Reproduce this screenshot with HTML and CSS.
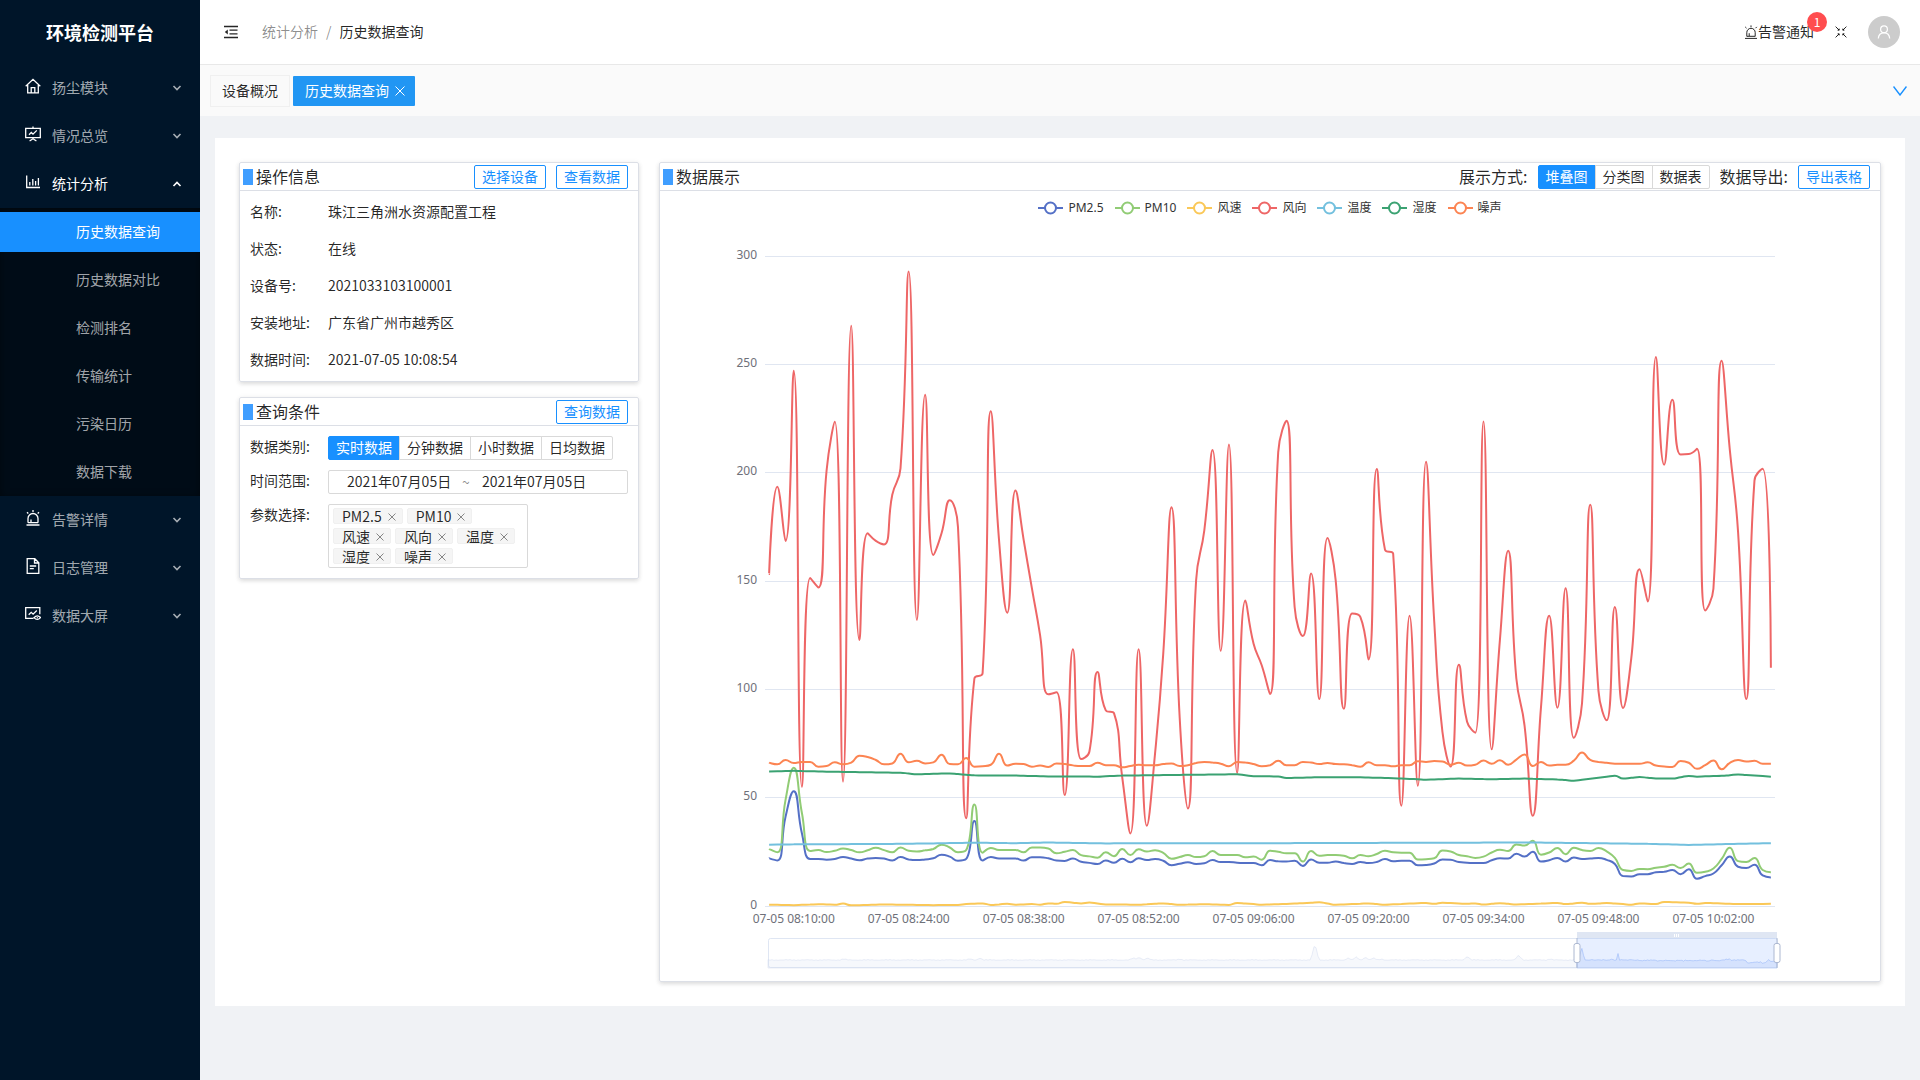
FILE: index.html
```html
<!DOCTYPE html>
<html lang="zh-CN">
<head>
    <meta charset="UTF-8">
    <meta name="viewport" content="width=device-width, initial-scale=1.0">
    <title>历史数据查询 - 环境检测平台</title>
    <link rel="stylesheet" href="styles.css">
</head>
<body>
    <div class="layout">
        <aside class="sider">
            <h1 class="logo">环境检测平台</h1>
            <nav class="menu">
                <button type="button" class="menu-item">
                    <svg class="menu-icon" viewBox="0 0 16 16"><path d="M.7 8.3 8 1.3l7.3 7M2.7 7v7.8h10.6V7M6.2 14.8V9.6h3.6v5.2"/></svg>
                    <span>扬尘模块</span>
                    <svg class="arrow" viewBox="0 0 10 10"><path d="M1.5 3 5 6.5 8.5 3"/></svg>
                </button>
                <button type="button" class="menu-item">
                    <svg class="menu-icon" viewBox="0 0 16 16"><path d="M8 .4v2M.7 2.4h14.6v9.2H.7zM4 8.8l2.3-2.3L8 8.2l3.8-3.8M8 11.6v1.6M4.6 15l3.4-2.2 3.4 2.2"/></svg>
                    <span>情况总览</span>
                    <svg class="arrow" viewBox="0 0 10 10"><path d="M1.5 3 5 6.5 8.5 3"/></svg>
                </button>
                <button type="button" class="menu-item open">
                    <svg class="menu-icon" viewBox="0 0 16 16"><path d="M1.7 1.5v12h13.3M4.8 11.5V8M7.8 11.5V5M10.6 11.5V7M13.4 11.5V4"/></svg>
                    <span>统计分析</span>
                    <svg class="arrow" viewBox="0 0 10 10"><path d="M1.5 7 5 3.500 8.5 7"/></svg>
                </button>
                <div class="submenu">
                    <a href="#" class="active">历史数据查询</a>
                    <a href="#">历史数据对比</a>
                    <a href="#">检测排名</a>
                    <a href="#">传输统计</a>
                    <a href="#">污染日历</a>
                    <a href="#">数据下载</a>
                </div>
                <button type="button" class="menu-item">
                    <svg class="menu-icon" viewBox="0 0 16 16"><path d="M1.5 15h13M3 12.800V8.500a5 5 0 0 1 10 0v4.300M3 12.600h10M6 12.500V9.500M8 0v2M2 2.200l1.300 1.300M14 2.200l-1.300 1.300"/></svg>
                    <span>告警详情</span>
                    <svg class="arrow" viewBox="0 0 10 10"><path d="M1.5 3 5 6.5 8.5 3"/></svg>
                </button>
                <button type="button" class="menu-item">
                    <svg class="menu-icon" viewBox="0 0 16 16"><path d="M2.200.7h7.600l4 4v10.600H2.200zM9.500.9V5h4M4.800 8h6.400M4.800 10.700h4"/></svg>
                    <span>日志管理</span>
                    <svg class="arrow" viewBox="0 0 10 10"><path d="M1.5 3 5 6.5 8.5 3"/></svg>
                </button>
                <button type="button" class="menu-item">
                    <svg class="menu-icon" viewBox="0 0 16 16"><path d="M8.500 12.300H.7V1.700h14.100v6.500M3.700 8.800l2.500-2.500 1.900 1.900 3.700-3.700M9 11.600q3.300-3.600 6.600 0-3.300 3.600-6.600 0zM11.800 11.600h1"/></svg>
                    <span>数据大屏</span>
                    <svg class="arrow" viewBox="0 0 10 10"><path d="M1.5 3 5 6.5 8.5 3"/></svg>
                </button>
            </nav>
        </aside>

        <div class="main">
            <header class="header">
                <button type="button" class="icon-btn" aria-label="收起菜单">
                    <svg class="fold-icon" viewBox="0 0 14 14"><path d="M0 1.500h14M5.500 5.200h8M5.500 8.800h8M0 12.500h14"/><path class="solid" d="M3.800 4.500v5L.8 7z"/></svg>
                </button>
                <div class="breadcrumb">
                    <a href="#">统计分析</a><span class="sep">/</span><span class="current">历史数据查询</span>
                </div>
                <div class="header-right">
                    <button type="button" class="notice">
                        <svg viewBox="0 0 14 14"><path d="M1 13.400h12M2.800 11.400V7.500a4.200 4.200 0 0 1 8.400 0v3.900M2.800 11.300h8.400M5.200 11V8.200M7 .4v1.800M1.200 1.900l1.300 1.300M12.800 1.900l-1.300 1.300"/></svg>
                        <span>告警通知</span>
                        <sup class="badge">1</sup>
                    </button>
                    <button type="button" class="icon-btn" aria-label="退出全屏">
                        <svg class="screen-icon" viewBox="0 0 12 12"><path d="M.6.6 4 4M8 4 11.400.6M.6 11.400 4 8M8 8l3.400 3.400"/><path d="M4.200 2.600v1.600H2.600M7.800 2.600v1.600h1.600M4.200 9.400V7.800H2.600M7.800 9.400V7.800h1.600"/></svg>
                    </button>
                    <button type="button" class="avatar" aria-label="用户">
                        <svg viewBox="0 0 14 14"><circle cx="7" cy="4.200" r="3.400"/><path d="M1.300 13.500c.2-3.400 2.500-5.700 5.700-5.700s5.500 2.300 5.700 5.700"/></svg>
                    </button>
                </div>
            </header>

            <div class="tabs">
                <a href="#" class="tab">设备概况</a>
                <a href="#" class="tab active">历史数据查询
                    <svg viewBox="0 0 10 10"><path d="m.5.5 9 9m0-9-9 9"/></svg>
                </a>
                <button type="button" class="icon-btn tabs-more" aria-label="更多标签">
                    <svg viewBox="0 0 14 10"><path d="M.5.5 7 9 13.500.5"/></svg>
                </button>
            </div>

            <main class="content">
                <div class="left-col">
                    <section class="card">
                        <div class="card-head">
                            <h2>操作信息</h2>
                            <div class="card-tools">
                                <button type="button" class="btn">选择设备</button>
                                <button type="button" class="btn">查看数据</button>
                            </div>
                        </div>
                        <dl class="info">
                            <div><dt>名称:</dt><dd>珠江三角洲水资源配置工程</dd></div>
                            <div><dt>状态:</dt><dd>在线</dd></div>
                            <div><dt>设备号:</dt><dd>2021033103100001</dd></div>
                            <div><dt>安装地址:</dt><dd>广东省广州市越秀区</dd></div>
                            <div><dt>数据时间:</dt><dd>2021-07-05 10:08:54</dd></div>
                        </dl>
                    </section>

                    <section class="card">
                        <div class="card-head">
                            <h2>查询条件</h2>
                            <div class="card-tools">
                                <button type="button" class="btn">查询数据</button>
                            </div>
                        </div>
                        <form class="query">
                            <div class="form-row">
                                <span class="form-label" id="typeLabel">数据类别:</span>
                                <div class="radio-group" role="radiogroup" aria-labelledby="typeLabel">
                                    <label><input type="radio" name="type" checked><span>实时数据</span></label>
                                    <label><input type="radio" name="type"><span>分钟数据</span></label>
                                    <label><input type="radio" name="type"><span>小时数据</span></label>
                                    <label><input type="radio" name="type"><span>日均数据</span></label>
                                </div>
                            </div>
                            <div class="form-row">
                                <label class="form-label" for="startDate">时间范围:</label>
                                <div class="range">
                                    <input type="text" id="startDate" value="2021年07月05日">
                                    <span>~</span>
                                    <input type="text" aria-label="结束日期" value="2021年07月05日">
                                </div>
                            </div>
                            <div class="form-row">
                                <span class="form-label">参数选择:</span>
                                <div class="tags" id="tags"></div>
                            </div>
                        </form>
                    </section>
                </div>

                <section class="card chart-card">
                    <div class="card-head">
                        <h2>数据展示</h2>
                        <div class="card-tools">
                            <span class="tool-label" id="modeLabel">展示方式:</span>
                            <div class="radio-group" role="radiogroup" aria-labelledby="modeLabel">
                                <label><input type="radio" name="mode" checked><span>堆叠图</span></label>
                                <label><input type="radio" name="mode"><span>分类图</span></label>
                                <label><input type="radio" name="mode"><span>数据表</span></label>
                            </div>
                            <span class="tool-label">数据导出:</span>
                            <button type="button" class="btn">导出表格</button>
                        </div>
                    </div>
                    <div class="legend" id="legend"></div>
                    <svg class="chart" id="chart"></svg>
                </section>
            </main>
        </div>
    </div>
    <script src="chart.js"></script>
</body>
</html>
```
FILE: styles.css
```css
* {
    box-sizing: border-box;
}
body {
    margin: 0;
    font-family: "Noto Sans CJK SC", sans-serif;
    font-size: 14px;
    line-height: 22px;
    color: rgba(0, 0, 0, 0.85);
    background-color: #f0f2f5;
}
button, input {
    font: inherit;
    color: inherit;
}
button {
    padding: 0;
    border: none;
    background: none;
    cursor: pointer;
}
a {
    color: inherit;
    text-decoration: none;
}
svg {
    fill: none;
    stroke: currentColor;
}
.layout {
    display: flex;
    min-height: 100vh;
}

/* 侧边栏 */
.sider {
    flex: 0 0 200px;
    background-color: #001529;
    color: #fff;
}
.logo {
    margin: 0;
    font-size: 18px;
    line-height: 64px;
    text-align: center;
}
.menu-item {
    display: flex;
    align-items: center;
    width: 100%;
    height: 48px;
    padding: 0 18px 0 25px;
    color: rgba(255, 255, 255, 0.65);
    text-align: left;
}
.menu-item span {
    flex: 1;
    padding-bottom: 2px;
}
.menu-item.open {
    color: #fff;
}
.menu-icon {
    width: 16px;
    height: 16px;
    margin: 0 11px 4px 0;
    color: #fff;
    stroke-width: 1.3;
}
.arrow {
    width: 10px;
    height: 10px;
    stroke-width: 1.6;
}
.submenu {
    background-color: #000c17;
    box-shadow: inset 0 2px 8px rgba(0, 0, 0, 0.45);
    padding: 4px 0;
    display: flex;
    flex-direction: column;
    gap: 8px;
}
.submenu a {
    padding: 0 0 2px 76px;
    line-height: 38px;
    color: rgba(255, 255, 255, 0.65);
}
.submenu a.active {
    color: #fff;
    background-color: #1890ff;
}

/* 顶部 */
.main {
    flex: 1;
    min-width: 0;
}
.header {
    display: flex;
    align-items: center;
    height: 65px;
    padding: 0 20px 0 24px;
    background-color: #fff;
    border-bottom: 1px solid #e8e8e8;
}
.icon-btn {
    display: flex;
}
.fold-icon {
    width: 14px;
    height: 14px;
    stroke-width: 1.3;
}
.fold-icon .solid {
    fill: currentColor;
    stroke: none;
}
.breadcrumb {
    margin-left: 24px;
    padding-bottom: 2px;
    color: rgba(0, 0, 0, 0.45);
}
.breadcrumb .sep {
    margin: 0 8px;
}
.breadcrumb .current {
    color: rgba(0, 0, 0, 0.85);
}
.header-right {
    display: flex;
    align-items: center;
    margin-left: auto;
}
.notice {
    position: relative;
    display: flex;
    align-items: center;
    margin-right: 21px;
}
.notice span {
    padding-bottom: 2px;
}
.notice svg {
    width: 14px;
    height: 14px;
}
.badge {
    position: absolute;
    top: -8px;
    right: -13px;
    width: 20px;
    height: 20px;
    border-radius: 10px;
    background-color: #ff4d4f;
    color: #fff;
    font-size: 12px;
    line-height: 20px;
}
.screen-icon {
    width: 12px;
    height: 12px;
}
.avatar {
    display: flex;
    align-items: center;
    justify-content: center;
    width: 32px;
    height: 32px;
    margin-left: 21px;
    border-radius: 50%;
    background-color: #ccc;
    color: #fff;
}
.avatar svg {
    width: 14px;
    height: 14px;
    stroke-width: 1.2;
}
.tabs {
    display: flex;
    align-items: center;
    gap: 3px;
    height: 51px;
    padding: 0 13px 0 10px;
    background-color: #fafafa;
}
.tab {
    display: flex;
    align-items: center;
    gap: 6px;
    height: 32px;
    padding: 0 11px 2px;
    border: 1px solid #f0f0f0;
}
.tab.active {
    height: 30px;
    padding: 0 10px 2px 12px;
    border: none;
    border-radius: 1px;
    background-color: #2196f3;
    color: #fff;
}
.tab svg {
    width: 10px;
    height: 10px;
    margin-top: 3px;
}
.tabs-more {
    margin-left: auto;
    color: #1890ff;
}
.tabs-more svg {
    width: 14px;
    height: 10px;
    stroke-width: 1.4;
}

/* 内容 */
.content {
    display: flex;
    align-items: flex-start;
    gap: 20px;
    margin: 22px 15px 0;
    padding: 24px;
    background-color: #fff;
}
.left-col {
    flex: 0 0 400px;
    display: flex;
    flex-direction: column;
    gap: 15px;
}
.card {
    border: 1px solid #dcdfe6;
    border-radius: 2px;
    box-shadow: 0 2px 4px rgba(0, 0, 0, 0.12), 0 0 6px rgba(0, 0, 0, 0.04);
}
.chart-card {
    flex: 1;
    min-width: 0;
}
.card-head {
    display: flex;
    align-items: center;
    height: 28px;
    padding: 0 10px 0 3px;
    border-bottom: 1px solid #dcdfe6;
}
.card-head h2 {
    display: flex;
    align-items: center;
    gap: 3px;
    margin: 0;
    padding-bottom: 2px;
    font-size: 16px;
    font-weight: normal;
}
.card-head h2::before {
    content: "";
    width: 10px;
    height: 16px;
    margin-top: 3px;
    background-color: #409eff;
}
.card-tools {
    display: flex;
    align-items: center;
    gap: 10px;
    margin-left: auto;
}
.tool-label {
    padding-bottom: 2px;
    font-size: 16px;
}
.btn {
    height: 24px;
    padding: 0 7px 2px;
    border: 1px solid #1890ff;
    border-radius: 2px;
    background-color: #fff;
    color: #1890ff;
    line-height: 20px;
}
.info {
    margin: 0;
    padding: 3px 10px 2px;
}
.info div {
    display: flex;
    padding-bottom: 2px;
    line-height: 35px;
}
.info dt {
    width: 78px;
}
.info dd {
    margin: 0;
}
.query {
    display: flex;
    flex-direction: column;
    gap: 10px;
    padding: 10px;
}
.form-row {
    display: flex;
}
.form-label {
    width: 78px;
    line-height: 20px;
}
.radio-group {
    display: flex;
}
.radio-group label {
    position: relative;
    cursor: pointer;
}
.radio-group label + label {
    margin-left: -1px;
}
.radio-group input {
    position: absolute;
    margin: 0;
    opacity: 0;
}
.radio-group span {
    display: block;
    padding: 0 7px 2px;
    border: 1px solid #d9d9d9;
    background-color: #fff;
    line-height: 20px;
}
.radio-group label:first-child span {
    border-radius: 2px 0 0 2px;
}
.radio-group label:last-child span {
    border-radius: 0 2px 2px 0;
}
.radio-group input:checked + span {
    border-color: #1890ff;
    background-color: #1890ff;
    color: #fff;
}
.range {
    flex: 1;
    display: flex;
    align-items: center;
    height: 24px;
    padding-left: 18px;
    border: 1px solid #d9d9d9;
    border-radius: 2px;
}
.range input {
    width: 115px;
    height: 22px;
    padding: 0 0 2px;
    border: none;
    outline: none;
    background: none;
}
.range span {
    width: 20px;
    color: rgba(0, 0, 0, 0.45);
}
.tags {
    display: flex;
    flex-wrap: wrap;
    gap: 4px;
    width: 200px;
    padding: 3px 4px;
    border: 1px solid #d9d9d9;
    border-radius: 2px;
}
.tag {
    display: flex;
    align-items: center;
    gap: 6px;
    height: 16px;
    padding: 0 6px 0 8px;
    border: 1px solid #f0f0f0;
    border-radius: 2px;
    background-color: #f5f5f5;
    line-height: 14px;
}
.tag button {
    display: flex;
    padding-top: 1px;
    color: rgba(0, 0, 0, 0.45);
}
.tag svg {
    width: 8px;
    height: 8px;
}

/* 图表 */
.legend {
    display: flex;
    justify-content: center;
    gap: 11px;
    height: 34px;
    color: #333;
    font-family: "Noto Sans", "Noto Sans CJK SC", sans-serif;
    font-size: 12px;
    line-height: 34px;
}
.legend-item {
    display: flex;
    align-items: center;
    gap: 5px;
}
.legend-item svg {
    width: 25px;
    height: 14px;
    stroke-width: 2;
}
.legend-item circle {
    fill: #fff;
}
.chart {
    display: block;
    width: 100%;
    height: 756px;
    font-family: "Noto Sans", sans-serif;
}
.chart text {
    fill: #6e7079;
    stroke: none;
    font-size: 12px;
}
.chart .grid-line {
    stroke: #e0e6f1;
    shape-rendering: crispEdges;
}
.chart .series {
    stroke-width: 2;
    stroke-linejoin: bevel;
}
.chart .zoom-box {
    stroke: #d2dbee;
    opacity: 0.7;
}
.chart .zoom-fill {
    fill: rgba(135, 175, 255, 0.2);
    stroke: none;
}
.chart .zoom-move {
    fill: #d2dbee;
    stroke: none;
    opacity: 0.7;
}
.chart .zoom-line {
    stroke: #d2dbee;
    stroke-width: 0.5;
    fill: rgba(210, 219, 238, 0.2);
}
.chart .zoom-line-on {
    stroke: #8fb0f7;
    stroke-width: 0.5;
    fill: rgba(143, 176, 247, 0.2);
}
.chart .zoom-handle {
    fill: #fff;
    stroke: #acb8d1;
}
.chart .zoom-grip {
    stroke: #fff;
}
```
FILE: chart.js
```javascript
const series = [
    { name: 'PM2.5', color: '#5470c6', data: [
        22, 21, 41.2, 53, 33.5, 21.7, 21.7, 21.4, 21.7, 22.6, 21.9, 21.1, 21.9, 22.2, 21.9, 21, 22.6, 21.5, 21.2, 21.5,
        22, 23.7, 22.8, 20.9, 21.7, 39.2, 21, 22.6, 21.9, 21.9, 21.9, 21, 22.5, 22.5, 22, 21, 20.8, 21.9, 20.4, 19.9,
        19.4, 21, 20, 21.8, 20.2, 22, 21.2, 21.7, 20.9, 18.8, 19.5, 20.2, 19.4, 19.7, 21.2, 20.3, 20.3, 20, 19.8, 19.8,
        18.8, 21.2, 20.6, 20.5, 20.9, 18.5, 21.5, 20, 20, 20.5, 19.8, 19.4, 20.3, 19.8, 20.3, 21.7, 20.6, 20.9, 20.9, 18.8,
        18.9, 19.6, 21.5, 21.3, 20.3, 20, 19.8, 19.8, 21.1, 22, 21.9, 24.1, 22.8, 25, 20.5, 21.1, 22.2, 20.5, 22.4, 21.7,
        21.9, 22.2, 21.3, 19.4, 13.8, 13.6, 14.7, 14.7, 15.6, 15.8, 16.6, 14.7, 17, 12.6, 13.8, 15, 18.8, 22.8, 18.1, 17.5,
        19, 14.1, 13.2] },
    { name: 'PM10', color: '#91cc75', data: [
        26.3, 24.8, 49, 63.8, 42.8, 25.4, 25.8, 24.9, 25.5, 26.5, 25.8, 24.8, 25.7, 26.9, 25.8, 24.8, 27, 25.5, 25.2, 25.7,
        26.3, 28.3, 27, 24.8, 25.8, 46.9, 24.6, 26.8, 25.8, 25.8, 25.8, 24.8, 27, 27, 26.5, 24.3, 25, 25.8, 23.5, 22.9,
        22.3, 24.8, 23, 26.3, 23.5, 26.2, 25.2, 25.7, 24.5, 21.8, 22.6, 23.5, 22.6, 23, 25.4, 23.5, 23.5, 23.5, 22.5, 22.8,
        21.4, 25.5, 25, 24.3, 24.3, 20.5, 25.4, 23.2, 23.5, 23.5, 23.2, 22, 23.5, 23, 24, 25.5, 24.8, 24.6, 24.6, 21.5,
        21.6, 22, 25.6, 25.2, 23.5, 23, 22.2, 22.8, 24.7, 26, 25.4, 28.4, 27.9, 30.1, 23.7, 24.7, 26.8, 23.9, 26.9, 25.8,
        25.4, 26.8, 25.2, 22.2, 16.6, 16.2, 17.1, 17, 17.7, 18.1, 19, 17.5, 19.6, 15.3, 15.8, 17.3, 21.7, 26.9, 20.7, 20.3,
        22.2, 16.6, 15.6] },
    { name: '风速', color: '#fac858', data: sparse([
        [0, 0.6], [3, 0.4], [6, 0.8], [8, 0.6], [9, 1.1], [10, 0.3], [14, 0.7], [20, 0.4], [23, 0.5], [24, 0.9], [26, 1.2],
        [27, 0.5], [29, 1], [30, 0.6], [32, 0.9], [33, 0.6], [34, 1.2], [35, 1], [36, 1.9], [38, 1.2], [39, 1.6], [41, 0.7],
        [45, 0.6], [48, 1.2], [50, 0.6], [53, 0.8], [56, 0.5], [57, 1.4], [60, 0.6], [64, 1.1], [67, 1.7], [69, 0.6],
        [73, 1.2], [75, 0.6], [78, 1.1], [80, 1.4], [81, 1], [82, 1.5], [85, 1], [86, 1.2], [87, 0.7], [89, 1.3], [91, 0.7],
        [94, 1.1], [96, 1.4], [97, 0.9], [99, 1.5], [100, 1], [102, 1.4], [105, 0.6], [106, 1.2], [108, 0.9], [109, 1.9],
        [112, 1.5], [113, 1], [114, 1.4], [118, 0.9], [122, 1]]) },
    { name: '风向', color: '#ee6666', data: [
        153.2, 193.5, 168.5, 247, 55, 151.4, 147, 201, 223.5, 57.4, 267.8, 122.8, 172, 168.5, 166.9, 189.8, 202, 292.8, 132, 236,
        162, 172, 187.3, 175, 40.5, 105, 107.4, 228.3, 169, 135.4, 191.8, 169, 146.7, 125, 97.7, 98.6, 51.2, 118.5, 67.8, 71.2,
        108, 90.3, 89, 59.5, 33.5, 118.5, 37, 70.3, 116.5, 184, 87, 45, 150.3, 173.4, 210.5, 117.8, 213, 61.4, 141, 121,
        111, 97.8, 209.5, 224, 138, 124.6, 153.5, 95.5, 169.8, 150.3, 91, 135, 133.4, 113.8, 201.7, 164.5, 162.6, 46.3, 134, 55.5,
        205, 131.3, 80.4, 64.4, 111.3, 85, 80, 223.6, 72.3, 122.8, 164, 105, 83.3, 41.6, 91.7, 134, 91.5, 146.6, 77.6, 93.6,
        185.2, 99.3, 85.7, 138, 91.4, 114.4, 155.4, 140.5, 253.4, 203.7, 233.6, 208.4, 208.6, 211, 136.4, 146.4, 251.7, 210.4, 172.8, 95.5,
        196.3, 201.8, 110] },
    { name: '温度', color: '#73c0de', data: sparse([
        [0, 28.3], [4, 28.5], [14, 28.6], [20, 28.9], [25, 29.2], [30, 29], [34, 29.3], [41, 28.9], [62, 29], [80, 29.2],
        [93, 29.3], [100, 29], [107, 28.7], [112, 28.2], [117, 28.6], [122, 29]]) },
    { name: '湿度', color: '#3ba272', data: sparse([
        [0, 62.1], [3, 62.4], [7, 62], [12, 61.7], [16, 61.5], [18, 60.8], [22, 61.2], [25, 60.3], [30, 60.2], [34, 59.8],
        [40, 59.7], [43, 60.2], [50, 60.5], [57, 60.8], [59, 59.9], [62, 59.8], [63, 59.1], [67, 59.4], [72, 59.4], [76, 59],
        [80, 58.3], [84, 58.8], [88, 58.5], [92, 58.8], [96, 58.4], [98, 57.8], [101, 59.2], [103, 60.1], [104, 58.8],
        [106, 59.5], [108, 58.9], [110, 58.8], [112, 60], [113, 59.7], [116, 60.1], [118, 60.7], [122, 59.7]]) },
    { name: '噪声', color: '#fc8452', data: [
        66.2, 65.4, 67.4, 66, 66.5, 66.5, 64.3, 64.6, 66.3, 65.4, 66.2, 69.4, 68.8, 67.4, 65.4, 65.8, 70.3, 66.3, 67, 65.8,
        66.3, 69.8, 65.5, 65.4, 68.3, 64.3, 64.5, 65.2, 70.3, 64.8, 65.7, 65.5, 64.3, 64.8, 64.2, 65.8, 65.5, 64.9, 64.6, 64.6,
        66.1, 65, 65, 64, 64.6, 65.2, 65, 65, 65.5, 65.8, 64.6, 65, 66, 66.5, 66.2, 65.7, 64.5, 66.5, 66.2, 65.5,
        64.5, 65, 67, 65, 65, 66.5, 66.2, 65.5, 66, 65.5, 65.4, 65, 64.3, 66.3, 65, 65, 64.5, 65, 65, 66.8,
        66.5, 66.9, 66.7, 65.2, 66.1, 64.8, 65.2, 67.1, 65.7, 67.3, 65.2, 67.6, 69.9, 64.6, 66.5, 64.8, 65.2, 65.2, 67.1, 70.8,
        67.4, 66.5, 66.1, 65.7, 65.7, 65.6, 65.6, 66.3, 64.8, 64.4, 64.2, 66.9, 66.1, 63.3, 65, 67.1, 63.1, 66.1, 67.4, 66.7,
        67, 65.7, 65.7] }
];
const times = ['08:10:00', '08:24:00', '08:38:00', '08:52:00', '09:06:00', '09:20:00', '09:34:00', '09:48:00', '10:02:00'];

// [序号, 值] 之间线性补点
function sparse(points) {
    const out = [];
    for (let k = 0; k < points.length - 1; k++) {
        const [i0, v0] = points[k];
        const [i1, v1] = points[k + 1];
        for (let i = i0; i < i1; i++) {
            out.push(v0 + (v1 - v0) * (i - i0) / (i1 - i0));
        }
    }
    out.push(points[points.length - 1][1]);
    return out;
}

function clamp(v, a, b) {
    return Math.max(Math.min(v, Math.max(a, b)), Math.min(a, b));
}

// 平滑曲线，控制点不超出相邻两点
function smoothPath(pts) {
    let d = `M${pts[0][0]} ${pts[0][1]}`;
    let c0 = pts[0];
    for (let i = 1; i < pts.length; i++) {
        const prev = pts[i - 1], p = pts[i], next = pts[i + 1];
        let c1 = p, c2 = p;
        if (next) {
            const lenPrev = Math.hypot(p[0] - prev[0], p[1] - prev[1]);
            const lenNext = Math.hypot(next[0] - p[0], next[1] - p[1]);
            const ratio = lenNext / (lenNext + lenPrev);
            c2 = p.map((v, k) => clamp(v + (next[k] - prev[k]) * 0.5 * ratio, next[k], v));
            c1 = p.map((v, k) => clamp(v - (c2[k] - v) * lenPrev / lenNext, prev[k], v));
            c2 = p.map((v, k) => v + (v - c1[k]) * lenNext / lenPrev);
        }
        d += `C${[...c0, ...c1, ...p].map(v => v.toFixed(2)).join(' ')}`;
        c0 = c2;
    }
    return d;
}

function drawChart() {
    const svg = document.getElementById('chart');
    const width = svg.clientWidth;
    const left = 105, right = width - 105, top = 31, bottom = 681;
    const step = (right - left) / 123;
    const x = i => left + (i + 0.5) * step;
    const y = v => bottom - v * (bottom - top) / 300;
    let html = '';

    for (let v = 0; v <= 300; v += 50) {
        const gy = Math.floor(y(v)) + 0.5;
        html += `<line class="grid-line" x1="${left}" x2="${right}" y1="${gy}" y2="${gy}"/>`;
        html += `<text x="${left - 8}" y="${gy + 2.5}" text-anchor="end">${v}</text>`;
    }
    times.forEach((t, i) => {
        html += `<text x="${x(3 + i * 14)}" y="698" text-anchor="middle">07-05 ${t}</text>`;
    });
    series.forEach(s => {
        html += `<path class="series" stroke="${s.color}" d="${smoothPath(s.data.map((v, i) => [x(i), y(v)]))}"/>`;
    });

    // 缩放条
    const zl = 108, zr = width - 103, zt = 713, zb = 743;
    const zs = Math.round(zl + (zr - zl) * 0.802);
    const peaks = [[0.075, 1], [0.2, 1], [0.21, 2], [0.362, 2], [0.368, 3], [0.376, 2], [0.408, 1], [0.542, 17], [0.575, 2],
        [0.583, 3], [0.592, 3], [0.6, 2], [0.608, 1], [0.693, 4], [0.744, 5], [0.775, 1]];
    const before = [];
    for (let px = zl; px <= zs; px += 2) {
        let h = 8 + Math.sin(px * 1.7) * 0.3 + Math.sin(px * 0.31) * 0.2;
        peaks.forEach(([r, k]) => {
            h += k * Math.max(0, 1 - Math.abs(px - zl - r * (zr - zl)) / 4);
        });
        before.push(`${px} ${(zb - h).toFixed(1)}`);
    }
    const on = series[0].data.map((v, i) => `${(zs + (zr - zs) * i / 122).toFixed(1)} ${(zb - v * 0.37).toFixed(1)}`);
    html += `<path class="zoom-line" d="M${before.join('L')}L${zs} ${zb}H${zl}z"/>`;
    html += `<path class="zoom-line-on" d="M${on.join('L')}L${zr} ${zb}H${zs}z"/>`;
    html += `<rect class="zoom-box" x="${zl + 0.5}" y="${zt + 0.5}" width="${zr - zl}" height="29" rx="2"/>`;
    html += `<rect class="zoom-fill" x="${zs}" y="${zt}" width="${zr - zs}" height="30"/>`;
    html += `<rect class="zoom-move" x="${zs}" y="${zt - 6}" width="${zr - zs}" height="6"/>`;
    const mid = Math.round((zs + zr) / 2);
    html += `<path class="zoom-grip" d="M${mid - 2.5} 709v3M${mid - 0.5} 709v3M${mid + 1.5} 709v3"/>`;
    [zs, zr].forEach(hx => {
        html += `<path class="zoom-handle" d="M${hx} ${zt}v30"/>`;
        html += `<rect class="zoom-handle" x="${hx - 3}" y="718.5" width="6" height="19" rx="2"/>`;
    });
    svg.innerHTML = html;
}

document.getElementById('legend').innerHTML = series.map(s => `
    <span class="legend-item">
        <svg viewBox="0 0 25 14" style="stroke: ${s.color}"><path d="M0 7h25"/><circle cx="12.5" cy="7" r="5.5"/></svg>${s.name}
    </span>`).join('');
document.getElementById('tags').innerHTML = series.map(s => `
    <span class="tag">${s.name}<button type="button" aria-label="移除${s.name}"><svg viewBox="0 0 8 8"><path d="m.5.5 7 7m0-7-7 7"/></svg></button></span>`).join('');

drawChart();
window.addEventListener('resize', drawChart);
```
